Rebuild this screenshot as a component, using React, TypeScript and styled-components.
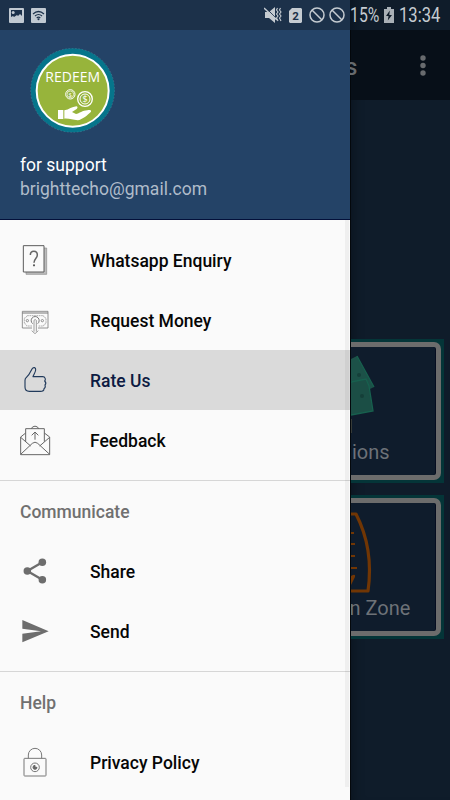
import React from "react";
import styled, { createGlobalStyle } from "styled-components";

const GlobalStyle = createGlobalStyle`
  * { box-sizing: border-box; }
  body { margin: 0; background: #0f1c2a; font-family: Roboto, "Liberation Sans", sans-serif; }
`;

const Screen = styled.div`
  width: 450px;
  height: 800px;
  overflow: hidden;
  display: flex;
  flex-direction: column;
  background: #0f1c2a;
`;

const StatusBar = styled.header`
  flex: none;
  height: 30px;
  display: flex;
  align-items: center;
  padding: 0 10px 0 9px;
  background: linear-gradient(90deg, #1c314a 350px, #0b1622 350px, #0f1c2a 362px);
`;

const StatusIcon = styled.svg<{ $gap?: number }>`
  flex: none;
  display: block;
  margin-left: ${(p) => p.$gap ?? 0}px;
`;

const Spacer = styled.div`
  flex: 1;
`;

const StatusText = styled.span<{ $width: number; $gap: number; $squeeze: number }>`
  width: ${(p) => p.$width}px;
  margin-left: ${(p) => p.$gap}px;
  font-size: 19.5px;
  line-height: 30px;
  padding-top: 2px;
  white-space: nowrap;
  color: #c5cbd1;
  transform: scaleX(${(p) => p.$squeeze});
  transform-origin: left center;
`;

const Body = styled.div`
  flex: 1;
  min-height: 0;
  display: flex;
`;

const Drawer = styled.aside`
  position: relative;
  flex: none;
  width: 350px;
  background: #fafafa;
`;

const DrawerHeader = styled.div`
  height: 190px;
  padding: 18px 20px 0;
  background: #244367;
  border-bottom: 1px solid #03103a;
`;

const Logo = styled.svg`
  display: block;
  margin-left: 10px;
`;

const AccountName = styled.div`
  margin-top: 20px;
  font-size: 17.5px;
  line-height: 24px;
  color: #fff;
`;

const AccountMail = styled.div`
  font-size: 17.5px;
  line-height: 24px;
  color: #b0bcca;
`;

const Group = styled.nav<{ $first?: boolean }>`
  padding: ${(p) => (p.$first ? "10px 0 10px" : "0 0 10px")};
  border-bottom: 1px solid #d6d6d6;
  &:last-of-type { border-bottom: 0; }
`;

const GroupTitle = styled.h2`
  margin: 0;
  height: 60px;
  padding: 0 20px;
  font-size: 17.5px;
  font-weight: 500;
  line-height: 63px;
  color: #707070;
`;

const Item = styled.a<{ $active?: boolean }>`
  display: flex;
  align-items: center;
  gap: 40px;
  height: 60px;
  padding: 0 20px;
  font-size: 17.5px;
  font-weight: 500;
  color: ${(p) => (p.$active ? "#0d1b42" : "#060606")};
  background: ${(p) => (p.$active ? "#dadada" : "transparent")};
`;

const ItemLabel = styled.span`
  padding-top: 2px;
`;

const ItemIcon = styled.svg`
  flex: none;
  width: 30px;
  height: 30px;
  overflow: visible;
`;

const Scrollbar = styled.div`
  position: absolute;
  right: 1px;
  top: 190px;
  width: 4px;
  height: 567px;
  background: rgba(0, 0, 0, 0.045);
`;

const Page = styled.main`
  flex: 1;
  min-width: 0;
  overflow: hidden;
  box-shadow: inset 1px 0 0 #04080c, inset 12px 0 12px -9px rgba(0, 0, 0, 0.3);
`;

const AppBar = styled.div`
  height: 70px;
  display: flex;
  align-items: center;
  justify-content: space-between;
  padding: 0 24px 0 0;
  background: #070f18;
  border-left: 1px solid #03070b;
`;

const PageTitle = styled.div`
  margin-left: -5.5px;
  padding-top: 4px;
  font-size: 23px;
  font-weight: 500;
  color: #666a6d;
`;

const Cards = styled.div`
  display: flex;
  flex-direction: column;
  gap: 12px;
  padding: 239px 6px 0 1px;
`;

const Card = styled.section`
  height: 144px;
  padding: 3px 3px 3px 0;
  background: #043538;
`;

const CardFrame = styled.div`
  height: 138px;
  display: flex;
  flex-direction: column;
  overflow: hidden;
  border: 5px solid #6c6c6c;
  border-left: 0;
  border-radius: 0 7px 7px 0;
  background: #0f1c2c;
  box-shadow: inset -1px 0 #060d20;
`;

const CardArt = styled.svg`
  display: block;
  flex: none;
`;

const CardLabel = styled.div<{ $top: number; $shift: number }>`
  margin-top: ${(p) => p.$top}px;
  margin-left: ${(p) => p.$shift}px;
  font-size: 20px;
  line-height: 24px;
  white-space: nowrap;
  color: #6d7278;
`;

const NoSignal = ({ gap }: { gap: number }) => (
  <StatusIcon $gap={gap} width="16" height="16" viewBox="0 0 16 16" fill="none" stroke="#c5cbd1" strokeWidth="1.5">
    <circle cx="8" cy="8" r="7" />
    <path d="M3 3l10 10" />
  </StatusIcon>
);

const RedeemLogo = () => (
  <Logo width="85" height="85" viewBox="0 0 255 255">
    <circle cx="128" cy="127" r="126" fill="#06758b" />
    <circle cx="128" cy="127" r="126" fill="none" stroke="#86a5b5" strokeWidth="2" strokeDasharray="5 5" opacity=".4" />
    <circle cx="128" cy="128" r="108" fill="#97b43b" stroke="#fff" strokeWidth="6" />
    <text x="46" y="101" textLength="164" lengthAdjust="spacingAndGlyphs" fontFamily="Open Sans, sans-serif" fontSize="44" fill="#fff">REDEEM</text>
    <g fill="none" stroke="#fff" strokeWidth="3">
      <circle cx="121" cy="139" r="14" />
      <circle cx="121" cy="139" r="10" strokeWidth="2" />
      <circle cx="165" cy="153" r="22" strokeWidth="4" />
      <circle cx="165" cy="153" r="15" strokeWidth="3" />
    </g>
    <g fill="#fff" fontFamily="Open Sans, sans-serif" textAnchor="middle">
      <text x="121" y="146" fontSize="18">$</text>
      <text x="165" y="163" fontSize="27">$</text>
    </g>
    <path fill="#fff" d="M84 186h16v27H84zM103 187c14-2 23-11 36-12 4 0 5 5 1 8l-14 9 12 6c10-1 20-11 34-11 7-2 13-1 11 4-10 10-25 23-40 26-15-1-25-6-40-5z" />
  </Logo>
);

const EnquiryIcon = () => (
  <ItemIcon viewBox="0 0 90 90">
    <path d="M18 9h62v79H18z" fill="#bcbcbc" stroke="#8b8b8b" strokeWidth="2" />
    <path d="M10 2h62v79H10z" fill="#fafafa" stroke="#5c5c5c" strokeWidth="3" />
    <path d="M31 30c0-15 21-15 21 0 0 10-10 11-10 23" fill="none" stroke="#666" strokeWidth="4.5" />
    <circle cx="42" cy="61" r="3.2" fill="#555" />
  </ItemIcon>
);

const MoneyIcon = () => (
  <ItemIcon viewBox="0 0 90 90" fill="none" stroke="#777" strokeWidth="2.4">
    <path d="M36 69H7V19h77v50H54" />
    <path d="M7 24h77" strokeWidth="3" />
    <path d="M36 63H20q0-6-7-7V39q7-1 7-7h51q0 6 7 7v17q-7 1-7 7H54" stroke="#999" strokeDasharray="5 2" />
    <circle cx="22" cy="47" r="3.5" />
    <circle cx="67" cy="47" r="3.5" />
    <path d="M38 56a12 12 0 1 1 15 0" strokeWidth="3" />
    <path d="M42 80V46q3.500-5 7 0v34M35 77l10 9 10-9" stroke="#888" />
  </ItemIcon>
);

const ThumbIcon = () => (
  <ItemIcon viewBox="0 0 90 90" fill="none" stroke="#213a5b" strokeWidth="3.4" strokeLinejoin="round">
    <path d="M16 41c8-7 15-18 20-29 4-7 12-5 11 3-1 8-6 13-8 20h29c8 0 10 9 6 13 4 4 4 9 1 12 2 5 0 9-3 11 0 6-4 8-11 8H28c-8 0-13-5-13-13V46z" />
  </ItemIcon>
);

const FeedbackIcon = () => (
  <ItemIcon viewBox="0 0 90 90" fill="none" stroke="#666" strokeWidth="3">
    <path d="M17 24L2 36v53h87V36L73 24M17 50V11h56v39M33 11q12-15 24 0M2 37l30 26M89 37L59 63M2 88l35-33q8-7 16 0l36 33" />
    <path d="M45 44V22M35 31l10-10 10 10" />
  </ItemIcon>
);

const ShareIcon = () => (
  <ItemIcon viewBox="0 0 90 90" fill="#6d6d6d" stroke="#6d6d6d">
    <path d="M67 19L22 45l45 26" fill="none" strokeWidth="7" />
    <g stroke="none">
      <circle cx="67" cy="19" r="11.3" />
      <circle cx="22" cy="45" r="11.3" />
      <circle cx="67" cy="71" r="11.3" />
    </g>
  </ItemIcon>
);

const SendIcon = () => (
  <ItemIcon viewBox="0 0 90 90" fill="#6d6d6d">
    <path d="M7 12l79 34L7 79V53l56-7-56-8z" />
  </ItemIcon>
);

const LockIcon = () => (
  <ItemIcon viewBox="0 -3 90 90" fill="none" stroke="#777" strokeWidth="3">
    <rect x="12" y="31" width="66" height="53" rx="2" />
    <path d="M25 31V21a20 20 0 0 1 40 0v10" />
    <circle cx="45" cy="58" r="13" />
    <path d="M45 52v6h6a6 6 0 1 1-6-6z" fill="#666" stroke="#666" />
  </ItemIcon>
);

export default function App() {
  return (
    <>
      <GlobalStyle />
      <Screen>
        <StatusBar>
          <StatusIcon width="15" height="15" viewBox="0 0 15 15">
            <rect width="15" height="15" rx="1" fill="#c1c9d1" />
            <path d="M2 2h11v6l-2-2-2 2-1-1-3 2-1-1-2 1z" fill="#1c314a" />
            <circle cx="4.2" cy="4.5" r="1.5" fill="#c1c9d1" />
          </StatusIcon>
          <StatusIcon $gap={7} width="15" height="15" viewBox="0 0 15 15">
            <rect width="15" height="15" rx="1" fill="#c1c9d1" />
            <path d="M2 6q5.500-5 11 0M4 8q3.500-3 7 0M5.700 10q1.800-1.600 3.600 0" fill="none" stroke="#1c314a" strokeWidth="1.2" />
            <circle cx="7.5" cy="11.3" r="1" fill="#1c314a" />
          </StatusIcon>
          <Spacer />
          <StatusIcon width="18" height="16" viewBox="0 0 18 16">
            <path d="M1 5h4l6-5v16l-6-5H1z" fill="#c5cbd1" />
            <path d="M1 0l12 12" stroke="#1c314a" strokeWidth="1" />
            <path d="M0 1l13 12" stroke="#c5cbd1" strokeWidth="1.4" />
            <path d="M13.500 1l-1 2 1.500 2-1.500 2 1.500 2-1.500 2 1.500 3M16.500 1l-1 2 1.500 2-1.500 2 1.500 2-1.500 2 1.500 3" fill="none" stroke="#c5cbd1" strokeWidth="1.1" />
          </StatusIcon>
          <StatusIcon $gap={7} width="13" height="15" viewBox="0 0 13 15">
            <path d="M3 0h9l1 1v13l-1 1H1l-1-1V3z" fill="#c5cbd1" />
            <text x="6.5" y="11.7" textAnchor="middle" fontFamily="Roboto, sans-serif" fontWeight="700" fontSize="11.5" fill="#1c314a">2</text>
          </StatusIcon>
          <NoSignal gap={7} />
          <NoSignal gap={4} />
          <StatusText $width={29} $gap={5} $squeeze={0.81}>15%</StatusText>
          <StatusIcon $gap={5} width="10" height="16" viewBox="0 0 10 16">
            <path d="M3 0h4v2h3v14H0V2h3z" fill="#a9b0b6" />
            <path d="M5.800 3.500L2 9h2.500l-.7 4.500L8 8H5.300z" fill="#0f1c2a" />
          </StatusIcon>
          <StatusText $width={41} $gap={5} $squeeze={0.85}>13:34</StatusText>
        </StatusBar>
        <Body>
          <Drawer>
            <DrawerHeader>
              <RedeemLogo />
              <AccountName>for support</AccountName>
              <AccountMail>brighttecho@gmail.com</AccountMail>
            </DrawerHeader>
            <Group $first>
              <Item><EnquiryIcon /><ItemLabel>Whatsapp Enquiry</ItemLabel></Item>
              <Item><MoneyIcon /><ItemLabel>Request Money</ItemLabel></Item>
              <Item $active><ThumbIcon /><ItemLabel>Rate Us</ItemLabel></Item>
              <Item><FeedbackIcon /><ItemLabel>Feedback</ItemLabel></Item>
            </Group>
            <Group>
              <GroupTitle>Communicate</GroupTitle>
              <Item><ShareIcon /><ItemLabel>Share</ItemLabel></Item>
              <Item><SendIcon /><ItemLabel>Send</ItemLabel></Item>
            </Group>
            <Group>
              <GroupTitle>Help</GroupTitle>
              <Item><LockIcon /><ItemLabel>Privacy Policy</ItemLabel></Item>
            </Group>
            <Scrollbar />
          </Drawer>
          <Page>
            <AppBar>
              <PageTitle>s</PageTitle>
              <svg width="6" height="21" viewBox="0 0 6 21" fill="#686b6e">
                <circle cx="3" cy="3" r="2.7" />
                <circle cx="3" cy="10.5" r="2.7" />
                <circle cx="3" cy="18" r="2.7" />
              </svg>
            </AppBar>
            <Cards>
              <Card>
                <CardFrame>
                  <CardArt width="84" height="86" viewBox="0 0 84 86">
                    <path d="M0 12L6 9l17 31-4 2-19-8z" fill="#1c5148" />
                    <path d="M0 35l15-3 3 7 4 25-22 4z" fill="#1b4e45" />
                    <path d="M0 35l15-3 3 7 4 25-22 4M6 9l17 31" fill="none" stroke="#17604e" strokeWidth="1.3" />
                    <circle cx="8" cy="28" r="2" fill="#153f39" />
                    <circle cx="11" cy="49" r="2" fill="#153f39" />
                    <path d="M0 72v14" stroke="#45453a" strokeWidth="1.5" />
                  </CardArt>
                  <CardLabel $top={7} $shift={1}>ions</CardLabel>
                </CardFrame>
              </Card>
              <Card>
                <CardFrame>
                  <CardArt width="84" height="90" viewBox="0 0 84 90" fill="none" stroke="#713604" strokeWidth="3.2">
                    <path d="M0 11h5q18 35 12 77H0" strokeLinejoin="round" />
                    <path d="M0 30h3M0 41h4M0 53h4M0 65h6" strokeWidth="2" />
                    <path d="M0 73q5-3 4 1L0 82z" fill="#713604" stroke="none" />
                  </CardArt>
                  <CardLabel $top={3} $shift={-1.5}>n Zone</CardLabel>
                </CardFrame>
              </Card>
            </Cards>
          </Page>
        </Body>
      </Screen>
    </>
  );
}
